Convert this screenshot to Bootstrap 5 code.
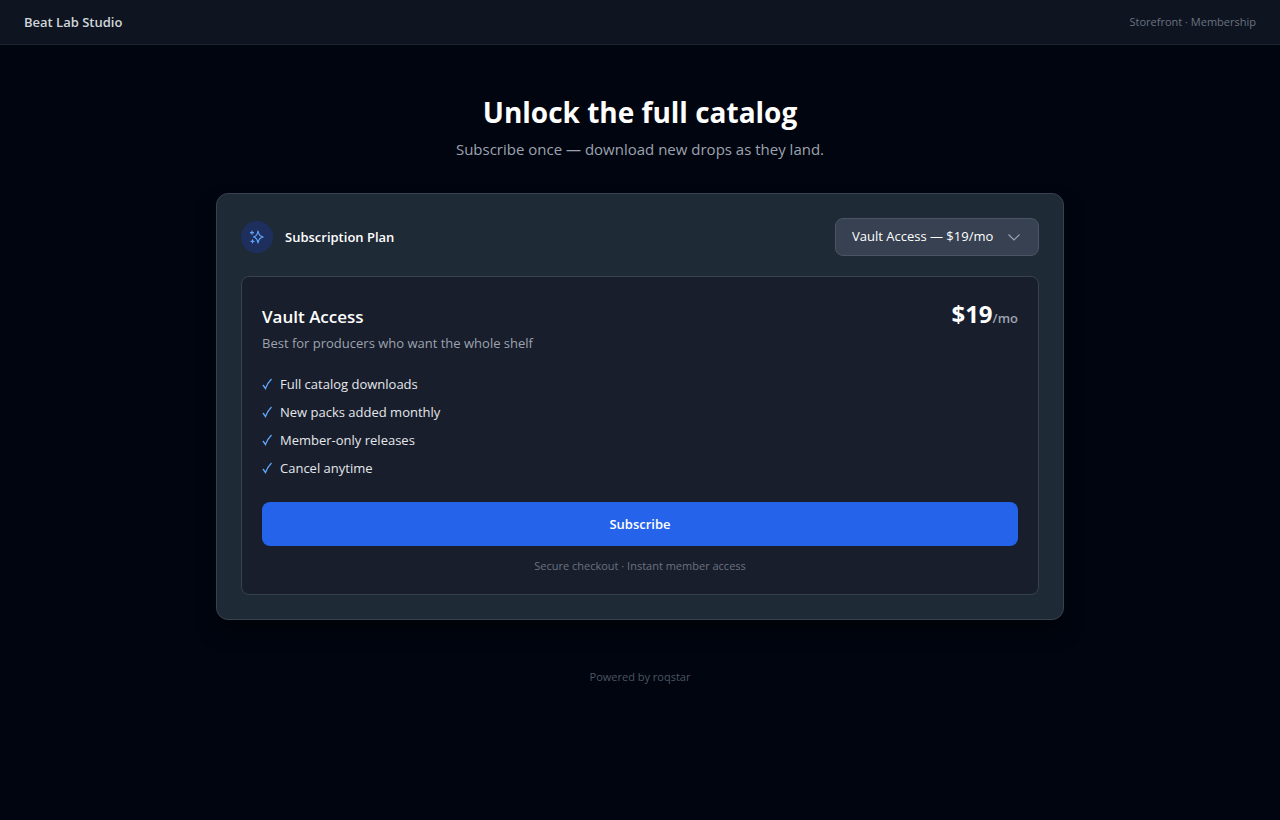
<!DOCTYPE html>
<html lang="en">
<head>
<meta charset="utf-8">
<meta name="viewport" content="width=device-width, initial-scale=1">
<title>Beat Lab Studio – Membership</title>
<link href="https://cdn.jsdelivr.net/npm/bootstrap@5.3.0/dist/css/bootstrap.min.css" rel="stylesheet">
<style>
  body { background: #01050f; color: #fff; font-family: "Segoe UI", "Open Sans", "Noto Sans", sans-serif; font-size: 13px; line-height: 20px; }
  .topbar { background: #0e1520; border-bottom: 1px solid #1d2733; min-height: 45px; }
  .brand { color: #d1d5db; font-weight: 600; }
  .note { color: #6b7280; font-size: 11px; line-height: 18px; }
  .shell { max-width: 896px; }
  .headline { font-size: 28px; line-height: 38px; font-weight: 700; margin-bottom: 6px; }
  .tagline { color: #9ca3af; font-size: 15px; line-height: 24px; }
  .plan { background: #1f2a37; border: 1px solid #374151; border-radius: 12px; box-shadow: 0 12px 20px #0006; }
  .tier { background: #181e2c; border: 1px solid #374151; border-radius: 8px; padding: 20px; }
  .spark { width: 32px; height: 32px; background: #1e2f5e; color: #60a5fa; }
  .picker { width: 204px; height: 38px; padding: 0 36px 0 16px; font-size: 13px; color: #fff; background-color: #374151; border: 1px solid #4b5563; border-radius: 8px;
    background-image: url("data:image/svg+xml,%3Csvg xmlns='http://www.w3.org/2000/svg' viewBox='0 0 16 16'%3E%3Cpath fill='none' stroke='%239ca3af' stroke-width='1.2' d='M2.500 5.500l5.500 5.500 5.500-5.500'/%3E%3C/svg%3E"); background-size: 16px; background-position: right 16px center; }
  .tier-name { font-size: 17px; line-height: 32px; font-weight: 600; }
  .tier-lead { line-height: 21px; }
  .muted { color: #9ca3af; }
  .price { font-size: 24px; line-height: 34px; font-weight: 700; }
  .price .muted { font-size: 13px; font-weight: 600; }
  .perks { color: #e5e7eb; margin: 20px 0 24px; }
  .perks svg { color: #60a5fa; }
  .subscribe { background: #2563eb; color: #fff; height: 44px; border: 0; border-radius: 8px; font-size: 13px; line-height: 22px; font-weight: 600; }
  .subscribe:hover { background: #1d4ed8; color: #fff; }
  .assurance { margin: 12px 0 0; line-height: 16px; }
  .powered { color: #4b5563; }
</style>
</head>
<body>
<header class="topbar d-flex align-items-center justify-content-between px-4">
  <span class="brand">Beat Lab Studio</span>
  <span class="note">Storefront · Membership</span>
</header>
<main class="shell container-fluid px-4 pt-5">
  <div class="text-center mb-4 pb-2">
    <h1 class="headline">Unlock the full catalog</h1>
    <p class="tagline mb-0">Subscribe once — download new drops as they land.</p>
  </div>
  <section class="plan p-4">
    <div class="d-flex flex-wrap align-items-center justify-content-between gap-3 mb-3 pb-1">
      <div class="d-flex align-items-center gap-2">
        <span class="spark rounded-circle d-flex align-items-center justify-content-center me-1">
          <svg width="16" height="16" viewBox="0 0 16 16" fill="none" stroke="currentColor" stroke-width="1.200" stroke-linecap="round" stroke-linejoin="round" aria-hidden="true">
            <path d="M9 2Q9.700 7.100 14.200 8Q9.700 8.900 9 14Q8.300 8.900 4.500 8Q8.300 7.100 9 2ZM3 2.200V5.200M1.500 3.700H4.500M3.500 10.800V13.800M2 12.300H5"/>
          </svg>
        </span>
        <label class="fw-semibold" for="plan">Subscription Plan</label>
      </div>
      <select class="picker form-select" id="plan"><option>Vault Access — $19/mo</option></select>
    </div>
    <div class="tier">
      <div class="d-flex justify-content-between align-items-start">
        <div>
          <h2 class="tier-name mb-0 mt-1">Vault Access</h2>
          <p class="tier-lead muted mb-0">Best for producers who want the whole shelf</p>
        </div>
        <div class="price">$19<span class="muted">/mo</span></div>
      </div>
      <ul class="perks list-unstyled d-flex flex-column gap-2">
        <li class="d-flex align-items-center gap-2"><svg width="10" height="12" viewBox="0 0 10 12" fill="none" stroke="currentColor" stroke-width="1.300" aria-hidden="true"><path d="M1 7L3.500 10.500Q5.500 5 9.500 1"/></svg>Full catalog downloads</li>
        <li class="d-flex align-items-center gap-2"><svg width="10" height="12" viewBox="0 0 10 12" fill="none" stroke="currentColor" stroke-width="1.300" aria-hidden="true"><path d="M1 7L3.500 10.500Q5.500 5 9.500 1"/></svg>New packs added monthly</li>
        <li class="d-flex align-items-center gap-2"><svg width="10" height="12" viewBox="0 0 10 12" fill="none" stroke="currentColor" stroke-width="1.300" aria-hidden="true"><path d="M1 7L3.500 10.500Q5.500 5 9.500 1"/></svg>Member-only releases</li>
        <li class="d-flex align-items-center gap-2"><svg width="10" height="12" viewBox="0 0 10 12" fill="none" stroke="currentColor" stroke-width="1.300" aria-hidden="true"><path d="M1 7L3.500 10.500Q5.500 5 9.500 1"/></svg>Cancel anytime</li>
      </ul>
      <button type="button" class="subscribe btn w-100">Subscribe</button>
      <p class="note assurance text-center">Secure checkout · Instant member access</p>
    </div>
  </section>
</main>
<footer class="note powered text-center py-5">Powered by roqstar</footer>
<script src="https://cdn.jsdelivr.net/npm/bootstrap@5.3.0/dist/js/bootstrap.bundle.min.js"></script>
</body>
</html>
